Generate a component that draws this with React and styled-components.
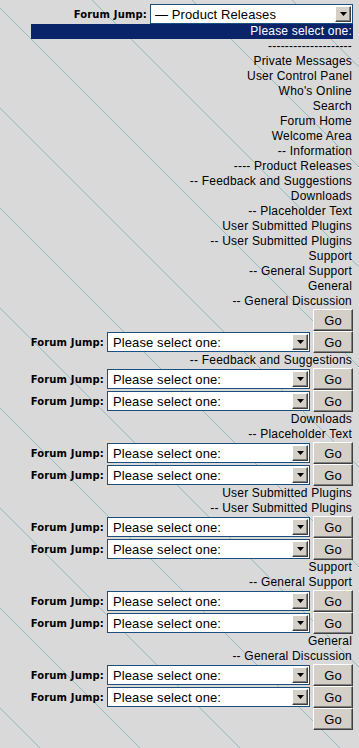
import React from 'react';
import styled, { createGlobalStyle } from 'styled-components';

const lineColor = '#92c0c0';

const GlobalStyle = createGlobalStyle`
  html {
    background-color: #d9d9d9;
    background-image: linear-gradient(
      45deg,
      transparent 45.75%, ${lineColor} 45.75%, ${lineColor} 46.25%, transparent 46.25%,
      transparent 95.75%, ${lineColor} 95.75%, ${lineColor} 96.25%, transparent 96.25%
    );
    background-size: 100px 100px;
  }
  body {
    margin: 0;
    font-family: "Liberation Sans", Arial, sans-serif;
    color: #000;
  }
`;

const Page = styled.div`
  display: flex;
  flex-direction: column;
  align-items: flex-end;
  padding: 4px 6px 0 0;
  min-height: 744px;
`;

const JumpRow = styled.div`
  display: flex;
  align-items: center;
  height: ${p => (p.$top ? '20px' : '22px')};
`;

const JumpLabel = styled.span`
  font-family: "DejaVu Sans", Verdana, sans-serif;
  font-weight: bold;
  font-size: 10px;
  letter-spacing: 0.15px;
  margin-right: 3px;
`;

const SelectBox = styled.div`
  box-sizing: border-box;
  width: 203px;
  height: 20px;
  border: 1px solid #1b4f7d;
  background: #fff;
  display: flex;
  align-items: center;
  font-size: 13px;
`;

const SelectValue = styled.span`
  flex: 1;
  padding-left: ${p => (p.$top ? '4px' : '5px')};
  letter-spacing: 0.1px;
  white-space: nowrap;
  overflow: hidden;
`;

const ArrowButton = styled.span`
  box-sizing: border-box;
  width: 16px;
  height: 16px;
  margin-right: 1px;
  background: #d4d0c8;
  border: 1px solid;
  border-color: #fff #404040 #404040 #fff;
  box-shadow: inset -1px -1px #808080;
  display: flex;
  align-items: center;
  justify-content: center;
`;

const GoButton = styled.button`
  box-sizing: border-box;
  width: 40px;
  height: 22px;
  margin: 0 0 0 ${p => (p.$inRow ? '3px' : '0')};
  padding: 0;
  background: #d4d0c8;
  border: 1px solid;
  border-color: #fff #404040 #404040 #fff;
  box-shadow: inset -1px -1px #808080;
  font-family: "Liberation Sans", Arial, sans-serif;
  font-size: 13px;
  color: #000;
`;

const DropList = styled.div`
  width: 322px;
`;

const Option = styled.div`
  height: 15px;
  line-height: 15px;
  font-size: 12px;
  letter-spacing: 0.2px;
  text-align: right;
  padding-right: 1px;
  white-space: nowrap;
  background: ${p => (p.$selected ? '#0a246a' : 'transparent')};
  color: ${p => (p.$selected ? '#fff' : '#000')};
`;

const CategoryText = styled.div`
  height: 15px;
  line-height: 15px;
  font-size: 12px;
  letter-spacing: 0.2px;
  padding-right: 1px;
  white-space: nowrap;
`;

const options = [
  'Please select one:',
  '--------------------',
  'Private Messages',
  'User Control Panel',
  "Who's Online",
  'Search',
  'Forum Home',
  'Welcome Area',
  '-- Information',
  '---- Product Releases',
  '-- Feedback and Suggestions',
  'Downloads',
  '-- Placeholder Text',
  'User Submitted Plugins',
  '-- User Submitted Plugins',
  'Support',
  '-- General Support',
  'General',
  '-- General Discussion',
];

const blocks = [
  { kind: 'go' },
  { kind: 'jump' },
  { kind: 'text', label: '-- Feedback and Suggestions' },
  { kind: 'jump' },
  { kind: 'jump' },
  { kind: 'text', label: 'Downloads' },
  { kind: 'text', label: '-- Placeholder Text' },
  { kind: 'jump' },
  { kind: 'jump' },
  { kind: 'text', label: 'User Submitted Plugins' },
  { kind: 'text', label: '-- User Submitted Plugins' },
  { kind: 'jump' },
  { kind: 'jump' },
  { kind: 'text', label: 'Support' },
  { kind: 'text', label: '-- General Support' },
  { kind: 'jump' },
  { kind: 'jump' },
  { kind: 'text', label: 'General' },
  { kind: 'text', label: '-- General Discussion' },
  { kind: 'jump' },
  { kind: 'jump' },
  { kind: 'go' },
];

const Arrow = () => (
  <svg width="7" height="4" viewBox="0 0 7 4">
    <path d="M0 0h7L3.5 4z" fill="#000" />
  </svg>
);

const Select = ({ value, top }) => (
  <SelectBox>
    <SelectValue $top={top}>{value}</SelectValue>
    <ArrowButton><Arrow /></ArrowButton>
  </SelectBox>
);

const App = () => (
  <>
    <GlobalStyle />
    <Page>
      <JumpRow $top>
        <JumpLabel>Forum Jump:</JumpLabel>
        <Select top value="— Product Releases" />
      </JumpRow>
      <DropList>
        {options.map((o, i) => (
          <Option key={i} $selected={i === 0}>{o}</Option>
        ))}
      </DropList>
      {blocks.map((b, i) => {
        if (b.kind === 'go') return <GoButton key={i}>Go</GoButton>;
        if (b.kind === 'text') return <CategoryText key={i}>{b.label}</CategoryText>;
        return (
          <JumpRow key={i}>
            <JumpLabel>Forum Jump:</JumpLabel>
            <Select value="Please select one:" />
            <GoButton $inRow>Go</GoButton>
          </JumpRow>
        );
      })}
    </Page>
  </>
);

export default App;
